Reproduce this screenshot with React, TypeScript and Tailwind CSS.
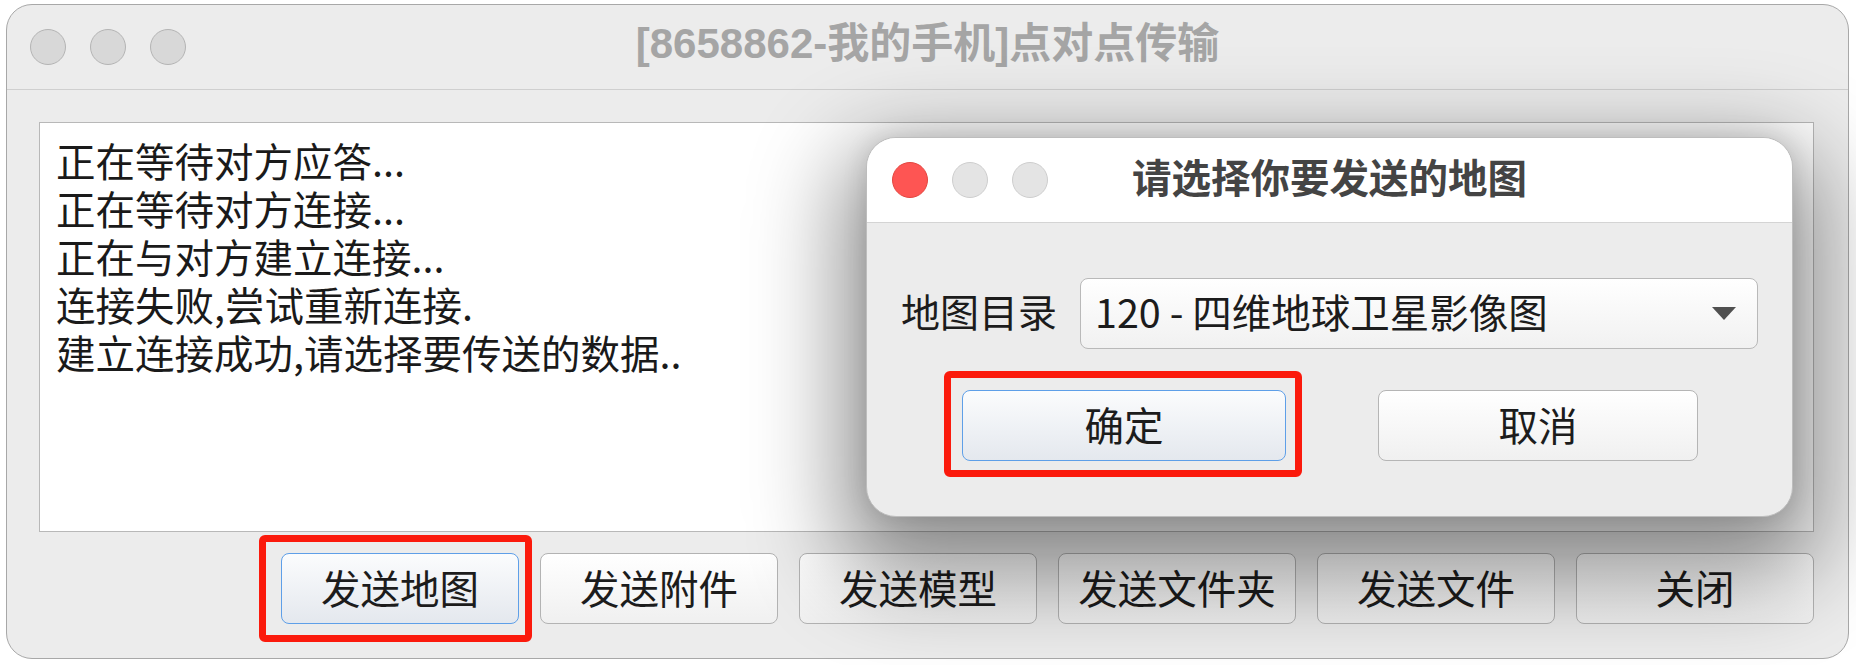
import React from "react";

const cjk = { fontFamily: '"Noto Sans CJK SC", "Noto Sans", sans-serif' };

const logLines = [
  "正在等待对方应答...",
  "正在等待对方连接...",
  "正在与对方建立连接...",
  "连接失败,尝试重新连接.",
  "建立连接成功,请选择要传送的数据..",
];

const sendButtons = ["发送地图", "发送附件", "发送模型", "发送文件夹", "发送文件", "关闭"];

function Light({ color }: { color: "red" | "grey" | "dim" }) {
  const cls =
    color === "red"
      ? "bg-[#fe5553] border-[#e2463f]"
      : color === "grey"
      ? "bg-[#e4e4e4] border-[#cdcdcd]"
      : "bg-[#d8d8d8] border-[#b4b4b4]";
  return <span className={`block w-[36px] h-[36px] rounded-full border-[1.5px] ${cls}`} />;
}

function Highlight({ className }: { className: string }) {
  return (
    <span
      className={`pointer-events-none absolute border-[7px] border-[#fb1a0c] rounded-[6px] ${className}`}
    />
  );
}

function MapDialog() {
  return (
    <div className="absolute left-[859px] top-[132px] w-[927px] h-[380px] rounded-[30px] border border-[#bdbdbd] bg-[#ececec] shadow-[0_36px_90px_26px_rgba(0,0,0,0.42),0_0_24px_rgba(0,0,0,0.12)] overflow-hidden flex flex-col">
      <div className="h-[85px] shrink-0 bg-white border-b-[1.5px] border-[#d4d4d4] grid grid-cols-[1fr_auto_1fr] items-center">
        <div className="flex items-center gap-[24px] pl-[25px]">
          <Light color="red" />
          <Light color="grey" />
          <Light color="grey" />
        </div>
        <div className="text-[39.5px] leading-none font-bold text-[#444444] pb-[8px]">请选择你要发送的地图</div>
        <div />
      </div>

      <div className="flex items-center px-[34px] pt-[55px]">
        <span className="text-[39px] leading-none text-[#1c1c1c] pb-[6px]">地图目录</span>
        <div className="ml-[23px] flex-1 h-[71px] rounded-[8px] border-[1.5px] border-[#b9b9b9] bg-gradient-to-b from-[#ffffff] to-[#f1f1f1] flex items-center justify-between pl-[14px] pr-[21px]">
          <span className="text-[39.5px] leading-none text-[#1c1c1c] pb-[6px]">120 - 四维地球卫星影像图</span>
          <svg width="24" height="13" viewBox="0 0 24 13">
            <path d="M0 0 H24 L12 13 Z" fill="#505050" />
          </svg>
        </div>
      </div>

      <div className="flex items-center pl-[95px] mt-[41px]">
        <button className="relative w-[324px] h-[71px] rounded-[8px] border-[1.5px] border-[#5e9fe8] bg-gradient-to-b from-[#fbfcfd] to-[#e4e8ee] text-[39.5px] leading-none text-[#1c1c1c] pb-[4px]">
          确定
          <Highlight className="-left-[19px] -top-[20px] -right-[17px] -bottom-[17px]" />
        </button>
        <button className="ml-[92px] w-[320px] h-[71px] rounded-[8px] border-[1.5px] border-[#b5b5b5] bg-gradient-to-b from-[#ffffff] to-[#f0f0f0] text-[39.5px] leading-none text-[#1c1c1c] pb-[4px]">
          取消
        </button>
      </div>
    </div>
  );
}

export default function App() {
  return (
    <div className="h-[665px] w-[1856px] bg-white pt-[4px] pl-[6px] overflow-hidden" style={cjk}>
      <div className="relative w-[1843px] h-[655px] rounded-[26px] border border-[#a8a8a8] bg-[#ececec] flex flex-col">
        {/* title bar */}
        <div className="h-[85px] shrink-0 border-b-[1.5px] border-[#cfcfcf] grid grid-cols-[1fr_auto_1fr] items-center">
          <div className="flex items-center gap-[24px] pl-[23px]">
            <Light color="dim" />
            <Light color="dim" />
            <Light color="dim" />
          </div>
          <div
            className="text-[42px] leading-none font-bold text-[#a5a5a5] pb-[6px]"
            style={{ fontFamily: '"Liberation Sans", "Noto Sans CJK SC", sans-serif' }}
          >
            [8658862-我的手机]点对点传输
          </div>
          <div />
        </div>

        {/* log area */}
        <div className="pl-[32px] pt-[32px]">
          <div className="w-[1775px] h-[410px] bg-white border border-[#b8b8b8] pl-[16px] pt-[13px]">
            {logLines.map((l) => (
              <div key={l} className="text-[39.5px] leading-[48px] text-[#1a1a1a]">
                {l}
              </div>
            ))}
          </div>

          <div className="w-[1775px] mt-[21px] flex justify-end gap-[21px]">
            {sendButtons.map((b, i) =>
              i === 0 ? (
                <button
                  key={b}
                  className="relative w-[238px] h-[71px] rounded-[8px] border-[1.5px] border-[#5e9fe8] bg-gradient-to-b from-[#fbfcfd] to-[#e4e8ee] text-[39.5px] leading-none text-[#1c1c1c] pb-[4px]"
                >
                  {b}
                  <Highlight className="-left-[23px] -top-[19px] -right-[14px] -bottom-[19px]" />
                </button>
              ) : (
                <button
                  key={b}
                  className="w-[238px] h-[71px] rounded-[8px] border-[1.5px] border-[#b3b3b3] bg-gradient-to-b from-[#ffffff] to-[#f0f0f0] text-[39.5px] leading-none text-[#1c1c1c] pb-[4px]"
                >
                  {b}
                </button>
              )
            )}
          </div>
        </div>

        <MapDialog />
      </div>
    </div>
  );
}
